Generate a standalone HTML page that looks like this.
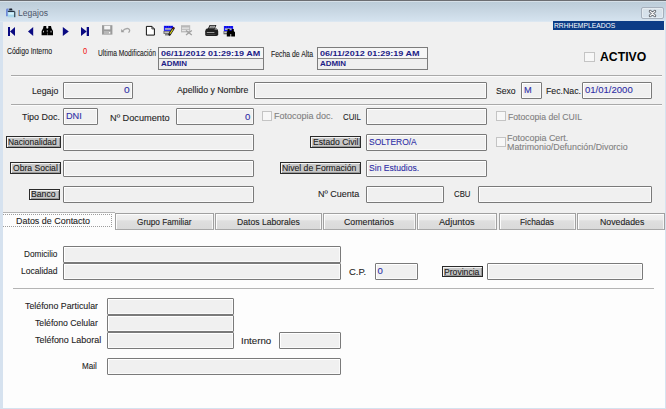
<!DOCTYPE html>
<html><head><meta charset="utf-8"><style>
html,body{margin:0;padding:0;}
body{width:666px;height:409px;overflow:hidden;position:relative;background:#f0f0f0;font-family:"Liberation Sans",sans-serif;}
.t{position:absolute;transform-origin:0 0;white-space:nowrap;z-index:3;-webkit-text-stroke:0.1px currentColor;}
.box{position:absolute;box-sizing:border-box;border:1px solid #7a7a7a;background:#f0f0f0;box-shadow:inset 1px 1px 0 #fff, inset -1px -1px 0 #fafafa;border-radius:1px;}
.box2{position:absolute;box-sizing:border-box;border:1px solid #7a7a7a;background:#f0f0f0;}
.btn{position:absolute;box-sizing:border-box;border:1px solid #2a2a2a;background:#c8c8c8;box-shadow:inset 1px 1px 0 #f4f4f4, inset -1px -1px 0 #9a9a9a;}
.chk{position:absolute;box-sizing:border-box;border:1px solid #c4c4c4;background:#f7f7f7;}
.dbox{position:absolute;box-sizing:border-box;border:1px solid #7c7c7c;background:#efefef;}
.drow{position:absolute;left:0;right:0;height:10px;box-sizing:border-box;}
.drow+.drow{border-top:1px solid #8a8a8a;height:11px}
.sep{position:absolute;height:1px;background:#a9a9a9;box-shadow:0 1px 0 #fbfbfb;}
.tab{position:absolute;box-sizing:border-box;border:1px solid #a0a0a0;border-bottom-color:#a8a8a8;background:linear-gradient(#f1f1f1 0%,#ebebeb 40%,#dfdfdf 45%,#dadada 100%);box-shadow:inset 1px 1px 0 #fcfcfc, inset -1px 0 0 #f6f6f6;}
.tabsel{position:absolute;box-sizing:border-box;border-top:1px solid #b4b4b4;background:#fdfdfd;z-index:2;}
.focus{position:absolute;box-sizing:border-box;border:1px dotted #9c9c9c;border-left:none;z-index:2;}
</style></head><body>
<!-- window frame -->
<div style="position:absolute;left:0;top:0;width:666px;height:409px;background:#d6e2ef"></div>
<div style="position:absolute;left:0;top:0;width:666px;height:1px;background:#6c6e72"></div>
<div style="position:absolute;left:0;top:1px;width:666px;height:1px;background:#d6e0e8"></div>
<div style="position:absolute;left:0;top:2px;width:666px;height:19px;background:linear-gradient(#bccdd9,#c6d5e1 40%,#d5e3ef)"></div>
<div style="position:absolute;left:0;top:21px;width:666px;height:1px;background:#dce7f1"></div>
<!-- close btn -->
<div style="position:absolute;left:641px;top:7px;width:23px;height:12px;box-sizing:border-box;border:1px solid #a6b0bc;border-radius:2px;background:linear-gradient(rgba(255,255,255,0.35),rgba(255,255,255,0.12));box-shadow:inset 0 0 0 1px rgba(255,255,255,0.35)"></div>
<svg style="position:absolute;left:647px;top:9px" width="11" height="9" viewBox="0 0 11 9"><path d="M3.2 2.3 L7.8 6.7 M7.8 2.3 L3.2 6.7" stroke="#4f545c" stroke-width="2.8" stroke-linecap="round"/><path d="M3.2 2.3 L7.8 6.7 M7.8 2.3 L3.2 6.7" stroke="#f4f4f4" stroke-width="1.3" stroke-linecap="round"/></svg>
<!-- content -->
<div style="position:absolute;left:3px;top:22px;width:662px;height:386px;background:#f0f0f0"></div>
<div style="position:absolute;left:553px;top:21px;width:111px;height:9px;background:#0c3c86"></div>
<div class="sep" style="left:11px;top:75px;width:651px"></div>
<div class="sep" style="left:11px;top:104px;width:651px"></div>
<div class="dbox" style="left:158px;top:47px;width:106px;height:23px"><div class="drow" style="top:0;background:#f6f6f6"></div><div class="drow" style="top:10px"></div></div>
<div class="dbox" style="left:317px;top:47px;width:111px;height:23px"><div class="drow" style="top:0;background:#f6f6f6"></div><div class="drow" style="top:10px"></div></div>
<!-- tab panel -->
<div style="position:absolute;left:3px;top:230px;width:662px;height:178px;background:#fdfdfd"></div>

<div class="sep" style="left:13px;top:288px;width:641px;box-shadow:none;background:#b4b4b4"></div>
<div class="tabsel" style="left:3px;top:212px;width:112px;height:19px"></div><div class="focus" style="left:3px;top:214px;width:109px;height:13px"></div><div class="tab" style="left:115px;top:213px;width:99px;height:17px"></div><div class="tab" style="left:215px;top:213px;width:107px;height:17px"></div><div class="tab" style="left:323px;top:213px;width:93px;height:17px"></div><div class="tab" style="left:417px;top:213px;width:80px;height:17px"></div><div class="tab" style="left:499px;top:213px;width:77px;height:17px"></div><div class="tab" style="left:577px;top:213px;width:88px;height:17px"></div>
<svg style="position:absolute;left:0;top:0" width="20" height="22" viewBox="0 0 20 22">
<path d="M6 10 Q6 8.6 7.4 8.6 L8.6 8.6 L8.6 16.2 L6 16.2 Z" fill="#6f8ad8"/>
<path d="M9.4 8.6 L12 8.6 L12.6 10.6 L9 10.6 Z" fill="#1a2230"/>
<path d="M7.6 10.8 L14.2 10.8 L15.2 12 L15.2 17.2 L7.8 17.2 Z" fill="#a8d8ec"/>
<rect x="7.8" y="10.8" width="6.8" height="1.2" fill="#243040"/>
<rect x="14.2" y="11.6" width="1.1" height="5.6" fill="#2c3a44"/>
<rect x="8.4" y="12.6" width="5.4" height="2" fill="#d8f2fa"/>
</svg>
<svg style="position:absolute;left:0;top:22px" width="240" height="18" viewBox="0 22 240 18">
<g fill="#0a0a82">
<rect x="8" y="27" width="2" height="9"/><path d="M10 31.5 L15 27 L15 36 Z"/>
<path d="M28 31.5 L33.2 27 L33.2 36 Z"/>
<path d="M68.8 31.5 L62.8 27 L62.8 36 Z"/>
<path d="M86.7 31.5 L81 27 L81 36 Z"/><rect x="86.7" y="27" width="2.3" height="9"/>
</g>
<!-- binoculars -->
<g fill="#000">
<path d="M43.6 26 L46.3 26 L46.3 28 L47.2 29.5 L47.2 35.2 L41.6 35.2 L41.6 31 L43.1 28.3 Z"/>
<path d="M48.3 26 L51 26 L51.5 28.3 L53 31 L53 35.2 L47.4 35.2 L47.4 29.5 L48.3 28 Z"/>
<rect x="46" y="28.6" width="2.6" height="4"/>
</g>
<g fill="#d8d8d8"><rect x="43" y="30.8" width="0.9" height="1.6"/><rect x="46.8" y="30.3" width="0.9" height="1.4"/><rect x="50.6" y="30.8" width="0.9" height="1.6"/></g>
<!-- floppy -->
<rect x="102" y="25.2" width="10.4" height="9.4" fill="#9b9b9b"/>
<rect x="104.2" y="25.8" width="6" height="3.6" fill="#f4f4f4"/>
<rect x="104" y="31" width="6.5" height="3.4" fill="#b8b8b8"/>
<rect x="109" y="32" width="1.2" height="1.4" fill="#fafafa"/>
<!-- undo -->
<path d="M121.2 29 L121.2 32.3 L124.5 32.3 Z" fill="#9a9a9a"/>
<path d="M122.6 30.9 Q125.4 28 128.2 28.6 Q130.4 29.6 129.3 31.7 L128.5 32.6" stroke="#a6a6a6" stroke-width="1.3" fill="none"/>
<!-- new doc -->
<path d="M146.4 26.4 L151.9 26.4 L154.4 28.9 L154.4 35.1 L146.4 35.1 Z" fill="#fff" stroke="#111" stroke-width="1"/>
<path d="M151.9 26.4 L151.9 28.9 L154.4 28.9" fill="none" stroke="#111" stroke-width="0.8"/>
<!-- edit grid -->
<rect x="163.9" y="25.8" width="9.2" height="5.1" fill="#1c1cff"/>
<g fill="#0000b8"><rect x="164.6" y="26.3" width="1.2" height="1"/><rect x="166.8" y="26.3" width="1.2" height="1"/><rect x="169" y="26.3" width="1.2" height="1"/><rect x="171.2" y="26.3" width="1.2" height="1"/></g>
<rect x="165" y="28.2" width="6.6" height="1.5" fill="#c4c4b0"/>
<rect x="163.5" y="30.9" width="6.8" height="2.9" fill="#5e5e5e"/>
<rect x="164.4" y="31.6" width="5" height="1.3" fill="#cfcfcf"/>
<rect x="165" y="34.4" width="5" height="0.9" fill="#3a3a3a"/>
<path d="M173.4 28.4 L169.6 34.4" stroke="#1a1a1a" stroke-width="2.6" stroke-linecap="round"/>
<path d="M172.9 29.3 L170 33.8" stroke="#e4dc18" stroke-width="1.1"/>
<circle cx="173.5" cy="28.2" r="0.9" fill="#6a1a10"/>
<!-- delete grid grey -->
<rect x="181" y="25.2" width="9.2" height="7.2" fill="#b8b8b8"/>
<rect x="182" y="27.5" width="7.2" height="1.3" fill="#e6e6e6"/>
<rect x="182" y="29.8" width="7.2" height="1.3" fill="#e6e6e6"/>
<path d="M186 30.5 L191.8 35 M191.8 30.5 L186 35" stroke="#a0a0a0" stroke-width="1.3"/>
<!-- printer -->
<path d="M209.6 25 L216.4 25 L214.8 29.2 L207.6 29.2 Z" fill="#1e1e1e"/>
<path d="M210.3 25.8 L215.2 25.8 L214.2 28.4 L209 28.4 Z" fill="#b8b8b8"/>
<path d="M210.6 26.8 L214 26.8 M210.2 27.7 L213.6 27.7" stroke="#555" stroke-width="0.5"/>
<path d="M206.8 28.4 L216.6 28.4 Q218.2 29.5 218.2 31.5 L218.2 34.2 Q218.2 36 216.4 36 L206.8 36 Q205.2 36 205.2 34.4 L205.2 31.2 Q205.4 29.2 206.8 28.4 Z" fill="#202020"/>
<path d="M214.5 29.2 L217 29.6" stroke="#8a8a8a" stroke-width="0.8"/>
<rect x="206.8" y="32" width="7.6" height="1" fill="#9c9c9c"/>
<rect x="206.5" y="34.2" width="9" height="0.7" fill="#505050"/>
<!-- grid binoculars -->
<rect x="223.9" y="26" width="9.2" height="5.1" fill="#1c1cff"/>
<g fill="#0000b8"><rect x="224.6" y="26.5" width="1.2" height="1"/><rect x="226.8" y="26.5" width="1.2" height="1"/><rect x="229" y="26.5" width="1.2" height="1"/><rect x="231.2" y="26.5" width="1.2" height="1"/></g>
<rect x="225" y="28.4" width="6.6" height="1.5" fill="#c4c4b0"/>
<rect x="223.5" y="31.1" width="4.5" height="3.2" fill="#5e5e5e"/>
<rect x="224.3" y="31.8" width="3" height="1.3" fill="#d0d0d0"/>
<g fill="#000">
<path d="M227.6 29 L229.6 29 L229.6 30.8 L230.4 31.6 L230.4 36.6 L226.8 36.6 L226.8 32.2 L227.6 31 Z"/>
<path d="M231.8 29 L233.8 29 L233.8 31 L235 32.2 L235 36.6 L231.2 36.6 L231.2 31.6 L231.8 30.8 Z"/>
<rect x="229.6" y="30.6" width="2.4" height="3.4"/>
</g>
</svg>

<div class="box" style="left:63px;top:82px;width:70px;height:17px"></div><div class="box" style="left:254px;top:82px;width:233px;height:17px"></div><div class="box" style="left:521px;top:82px;width:21px;height:17px"></div><div class="box" style="left:582px;top:82px;width:70px;height:17px"></div><div class="box" style="left:63px;top:108px;width:35px;height:17px"></div><div class="box" style="left:176px;top:108px;width:78px;height:17px"></div><div class="box" style="left:366px;top:108px;width:121px;height:17px"></div><div class="box" style="left:63px;top:134px;width:191px;height:17px"></div><div class="box" style="left:366px;top:134px;width:121px;height:17px"></div><div class="box" style="left:63px;top:160px;width:191px;height:17px"></div><div class="box" style="left:366px;top:160px;width:121px;height:17px"></div><div class="box" style="left:63px;top:186px;width:191px;height:17px"></div><div class="box" style="left:366px;top:186px;width:78px;height:17px"></div><div class="box" style="left:478px;top:186px;width:174px;height:17px"></div><div class="box" style="left:63px;top:246px;width:278px;height:17px"></div><div class="box" style="left:63px;top:263px;width:278px;height:17px"></div><div class="box" style="left:375px;top:263px;width:43px;height:17px"></div><div class="box" style="left:487px;top:263px;width:156px;height:17px"></div><div class="box" style="left:107px;top:298px;width:127px;height:17px"></div><div class="box" style="left:107px;top:315px;width:127px;height:17px"></div><div class="box" style="left:107px;top:332px;width:127px;height:17px"></div><div class="box" style="left:279px;top:332px;width:62px;height:17px"></div><div class="box" style="left:107px;top:358px;width:234px;height:17px"></div><div class="btn" style="left:6px;top:136px;width:55px;height:12px"></div><div class="btn" style="left:310px;top:136px;width:51px;height:12px"></div><div class="btn" style="left:10px;top:162px;width:51px;height:12px"></div><div class="btn" style="left:280px;top:162px;width:81px;height:12px"></div><div class="btn" style="left:29px;top:189px;width:31px;height:11px"></div><div class="btn" style="left:442px;top:266px;width:41px;height:11px"></div><div class="chk" style="left:584px;top:52px;width:11px;height:10px"></div><div class="chk" style="left:262px;top:111px;width:10px;height:10px"></div><div class="chk" style="left:496px;top:111px;width:10px;height:10px"></div><div class="chk" style="left:496px;top:137px;width:10px;height:10px"></div><div class="t" style="left:7.16px;top:46.96px;font-size:8.60px;line-height:8.60px;color:#1e1e1e;font-weight:normal;transform:scaleX(0.800);">Código Interno</div><div class="t" style="left:98.26px;top:48.66px;font-size:8.60px;line-height:8.60px;color:#1e1e1e;font-weight:normal;transform:scaleX(0.778);">Ultima Modificación</div><div class="t" style="left:271.35px;top:50.11px;font-size:8.60px;line-height:8.60px;color:#1e1e1e;font-weight:normal;transform:scaleX(0.801);">Fecha de Alta</div><div class="t" style="left:161.34px;top:49.51px;font-size:8.10px;line-height:8.10px;color:#1c1c86;font-weight:bold;transform:scaleX(1.111);-webkit-text-stroke:0;">06/11/2012 01:29:19 AM</div><div class="t" style="left:161.46px;top:60.21px;font-size:8.10px;line-height:8.10px;color:#1c1c86;font-weight:bold;transform:scaleX(0.982);-webkit-text-stroke:0;">ADMIN</div><div class="t" style="left:319.54px;top:49.51px;font-size:8.10px;line-height:8.10px;color:#1c1c86;font-weight:bold;transform:scaleX(1.116);-webkit-text-stroke:0;">06/11/2012 01:29:19 AM</div><div class="t" style="left:319.66px;top:60.21px;font-size:8.10px;line-height:8.10px;color:#1c1c86;font-weight:bold;transform:scaleX(0.982);-webkit-text-stroke:0;">ADMIN</div><div class="t" style="left:554.46px;top:21.76px;font-size:7.80px;line-height:7.80px;color:#ffffff;font-weight:normal;transform:scaleX(0.861);-webkit-text-stroke:0;">RRHHEMPLEADOS</div><div class="t" style="left:599.63px;top:50.74px;font-size:12.00px;line-height:12.00px;color:#000000;font-weight:bold;transform:scaleX(1.020);-webkit-text-stroke:0;">ACTIVO</div><div class="t" style="left:31.90px;top:87.35px;font-size:9.30px;line-height:9.30px;color:#1e1e1e;font-weight:normal;transform:scaleX(0.941);">Legajo</div><div class="t" style="left:177.30px;top:85.70px;font-size:9.30px;line-height:9.30px;color:#1e1e1e;font-weight:normal;transform:scaleX(0.939);">Apellido y Nombre</div><div class="t" style="left:496.27px;top:87.25px;font-size:9.30px;line-height:9.30px;color:#1e1e1e;font-weight:normal;transform:scaleX(0.928);">Sexo</div><div class="t" style="left:545.60px;top:86.70px;font-size:9.30px;line-height:9.30px;color:#1e1e1e;font-weight:normal;transform:scaleX(0.941);">Fec.Nac.</div><div class="t" style="left:585.02px;top:84.95px;font-size:9.80px;line-height:9.80px;color:#2e2ea6;font-weight:normal;transform:scaleX(0.973);">01/01/2000</div><div class="t" style="left:21.82px;top:112.80px;font-size:9.30px;line-height:9.30px;color:#1e1e1e;font-weight:normal;transform:scaleX(0.961);">Tipo Doc.</div><div class="t" style="left:66.07px;top:110.65px;font-size:9.80px;line-height:9.80px;color:#2e2ea6;font-weight:normal;transform:scaleX(0.935);">DNI</div><div class="t" style="left:109.66px;top:113.65px;font-size:9.30px;line-height:9.30px;color:#1e1e1e;font-weight:normal;transform:scaleX(0.989);">Nº Documento</div><div class="t" style="left:274.08px;top:111.60px;font-size:9.30px;line-height:9.30px;color:#808080;font-weight:normal;transform:scaleX(0.969);">Fotocopia doc.</div><div class="t" style="left:343.11px;top:112.60px;font-size:9.30px;line-height:9.30px;color:#1e1e1e;font-weight:normal;transform:scaleX(0.846);">CUIL</div><div class="t" style="left:507.51px;top:112.70px;font-size:9.30px;line-height:9.30px;color:#808080;font-weight:normal;transform:scaleX(0.931);">Fotocopia del CUIL</div><div class="t" style="left:8.13px;top:137.80px;font-size:9.30px;line-height:9.30px;color:#202020;font-weight:normal;transform:scaleX(0.906);">Nacionalidad</div><div class="t" style="left:312.91px;top:137.80px;font-size:9.30px;line-height:9.30px;color:#202020;font-weight:normal;transform:scaleX(0.924);">Estado Civil</div><div class="t" style="left:369.08px;top:137.10px;font-size:9.80px;line-height:9.80px;color:#2e2ea6;font-weight:normal;transform:scaleX(0.862);">SOLTERO/A</div><div class="t" style="left:507.38px;top:134.00px;font-size:9.30px;line-height:9.30px;color:#808080;font-weight:normal;transform:scaleX(0.965);">Fotocopia Cert.</div><div class="t" style="left:507.39px;top:142.70px;font-size:9.30px;line-height:9.30px;color:#808080;font-weight:normal;transform:scaleX(0.953);">Matrimonio/Defunción/Divorcio</div><div class="t" style="left:12.57px;top:164.30px;font-size:9.30px;line-height:9.30px;color:#202020;font-weight:normal;transform:scaleX(0.922);">Obra Social</div><div class="t" style="left:282.31px;top:164.10px;font-size:9.30px;line-height:9.30px;color:#202020;font-weight:normal;transform:scaleX(0.929);">Nivel de Formación</div><div class="t" style="left:369.07px;top:162.90px;font-size:9.80px;line-height:9.80px;color:#2e2ea6;font-weight:normal;transform:scaleX(0.877);">Sin Estudios.</div><div class="t" style="left:30.81px;top:190.30px;font-size:9.30px;line-height:9.30px;color:#202020;font-weight:normal;transform:scaleX(0.932);">Banco</div><div class="t" style="left:318.08px;top:189.65px;font-size:9.30px;line-height:9.30px;color:#1e1e1e;font-weight:normal;transform:scaleX(0.968);">Nº Cuenta</div><div class="t" style="left:453.81px;top:189.85px;font-size:9.30px;line-height:9.30px;color:#1e1e1e;font-weight:normal;transform:scaleX(0.838);">CBU</div><div class="t" style="left:16.39px;top:216.90px;font-size:9.30px;line-height:9.30px;color:#1e1e1e;font-weight:normal;transform:scaleX(0.961);">Datos de Contacto</div><div class="t" style="left:136.59px;top:218.20px;font-size:9.30px;line-height:9.30px;color:#1e1e1e;font-weight:normal;transform:scaleX(0.886);">Grupo Familiar</div><div class="t" style="left:236.51px;top:218.20px;font-size:9.30px;line-height:9.30px;color:#1e1e1e;font-weight:normal;transform:scaleX(0.927);">Datos Laborales</div><div class="t" style="left:343.76px;top:218.20px;font-size:9.30px;line-height:9.30px;color:#1e1e1e;font-weight:normal;transform:scaleX(0.946);">Comentarios</div><div class="t" style="left:439.40px;top:218.20px;font-size:9.30px;line-height:9.30px;color:#1e1e1e;font-weight:normal;transform:scaleX(0.983);">Adjuntos</div><div class="t" style="left:519.73px;top:218.20px;font-size:9.30px;line-height:9.30px;color:#1e1e1e;font-weight:normal;transform:scaleX(0.901);">Fichadas</div><div class="t" style="left:599.80px;top:218.20px;font-size:9.30px;line-height:9.30px;color:#1e1e1e;font-weight:normal;transform:scaleX(0.942);">Novedades</div><div class="t" style="left:24.14px;top:249.90px;font-size:9.30px;line-height:9.30px;color:#1e1e1e;font-weight:normal;transform:scaleX(0.886);">Domicilio</div><div class="t" style="left:20.72px;top:267.30px;font-size:9.30px;line-height:9.30px;color:#1e1e1e;font-weight:normal;transform:scaleX(0.919);">Localidad</div><div class="t" style="left:348.93px;top:267.60px;font-size:9.30px;line-height:9.30px;color:#1e1e1e;font-weight:normal;transform:scaleX(1.017);">C.P.</div><div class="t" style="left:443.51px;top:267.80px;font-size:9.30px;line-height:9.30px;color:#202020;font-weight:normal;transform:scaleX(0.926);">Provincia</div><div class="t" style="left:25.12px;top:301.95px;font-size:9.30px;line-height:9.30px;color:#1e1e1e;font-weight:normal;transform:scaleX(0.948);">Teléfono Particular</div><div class="t" style="left:34.63px;top:318.90px;font-size:9.30px;line-height:9.30px;color:#1e1e1e;font-weight:normal;transform:scaleX(0.935);">Teléfono Celular</div><div class="t" style="left:34.62px;top:336.30px;font-size:9.30px;line-height:9.30px;color:#1e1e1e;font-weight:normal;transform:scaleX(0.962);">Teléfono Laboral</div><div class="t" style="left:240.72px;top:336.60px;font-size:9.30px;line-height:9.30px;color:#1e1e1e;font-weight:normal;transform:scaleX(1.046);">Interno</div><div class="t" style="left:81.85px;top:362.40px;font-size:9.30px;line-height:9.30px;color:#1e1e1e;font-weight:normal;transform:scaleX(0.872);">Mail</div><div class="t" style="left:18.07px;top:7.85px;font-size:9.60px;line-height:9.60px;color:#4c566a;font-weight:normal;transform:scaleX(0.890);-webkit-text-stroke:0;">Legajos</div><div class="t" style="left:83.10px;top:47.26px;font-size:8.40px;line-height:8.40px;color:#f01c1c;font-weight:normal;transform:scaleX(0.893);">0</div><div class="t" style="left:123.59px;top:84.80px;font-size:9.60px;line-height:9.60px;color:#2e2ea6;font-weight:normal;transform:scaleX(1.063);">0</div><div class="t" style="left:244.92px;top:112.00px;font-size:9.60px;line-height:9.60px;color:#2e2ea6;font-weight:normal;">0</div><div class="t" style="left:524.06px;top:84.85px;font-size:9.60px;line-height:9.60px;color:#2e2ea6;font-weight:normal;transform:scaleX(0.964);">M</div><div class="t" style="left:377.52px;top:266.45px;font-size:9.60px;line-height:9.60px;color:#2e2ea6;font-weight:normal;">0</div>
</body></html>
